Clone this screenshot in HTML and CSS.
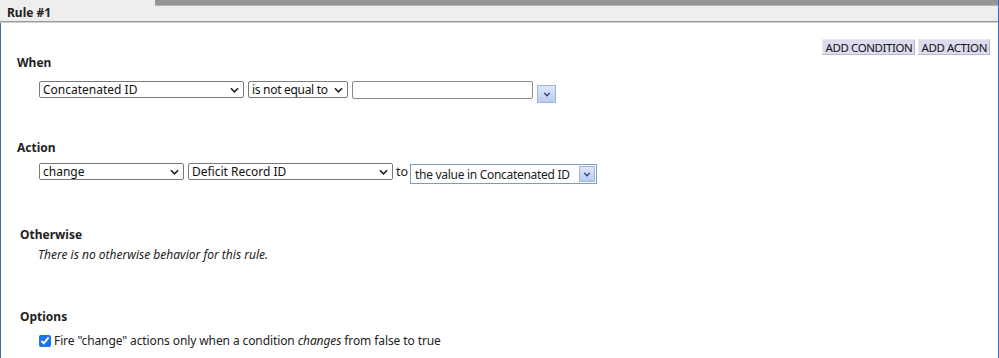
FILE: index.html
```html
<!DOCTYPE html>
<html lang="en">
<head>
    <meta charset="UTF-8">
    <meta name="viewport" content="width=device-width, initial-scale=1.0">
    <title>Rule #1</title>
    <link rel="stylesheet" href="styles.css">
</head>
<body>
    <div class="rule">
        <div class="rule-head">
            <div class="tab-strip"></div>
            <div class="rule-title">Rule #1</div>
        </div>
        <div class="rule-body">
            <div class="toolbar">
                <button class="tool-btn">ADD CONDITION</button>
                <button class="tool-btn">ADD ACTION</button>
            </div>

            <div class="label label-when">When</div>
            <div class="row row-when">
                <div class="select w-field">
                    <span>Concatenated ID</span>
                    <svg class="chev" viewBox="0 0 10 6"><path d="M1 1l4 4 4-4" /></svg>
                </div>
                <div class="select w-op">
                    <span>is not equal to</span>
                    <svg class="chev" viewBox="0 0 10 6"><path d="M1 1l4 4 4-4" /></svg>
                </div>
                <div class="text-input"></div>
                <div class="drop-btn">
                    <svg viewBox="0 0 10 6"><path d="M1.5 1l3.5 3.5 3.5-3.5" /></svg>
                </div>
            </div>

            <div class="label label-action">Action</div>
            <div class="row row-action">
                <div class="select w-verb">
                    <span>change</span>
                    <svg class="chev" viewBox="0 0 10 6"><path d="M1 1l4 4 4-4" /></svg>
                </div>
                <div class="select w-target">
                    <span>Deficit Record ID</span>
                    <svg class="chev" viewBox="0 0 10 6"><path d="M1 1l4 4 4-4" /></svg>
                </div>
                <span class="to">to</span>
                <div class="combo">
                    <span>the value in Concatenated ID</span>
                    <div class="combo-btn">
                        <svg viewBox="0 0 10 6"><path d="M1.5 1l3.5 3.5 3.5-3.5" /></svg>
                    </div>
                </div>
            </div>

            <div class="label label-otherwise">Otherwise</div>
            <div class="note">There is no otherwise behavior for this rule.</div>

            <div class="label label-options">Options</div>
            <label class="option">
                <input type="checkbox" checked>
                <span>Fire "change" actions only when a condition <em>changes</em> from false to true</span>
            </label>
        </div>
    </div>
</body>
</html>
```

FILE: styles.css
```css
body {
    margin: 0;
    font-family: "Noto Sans", "Open Sans", sans-serif;
    font-size: 12px;
    color: #222;
    background-color: #fff;
}

.rule {
    width: 998px;
    height: 358px;
    border-right: 1px solid #3f6cb0;
    display: flex;
    flex-direction: column;
}

.rule-head {
    background-color: #eeeeee;
    border-bottom: 1px solid #9a9a9a;
    box-shadow: 0 1px 0 #d0d0d0;
    height: 21px;
}

.tab-strip {
    margin-left: 155px;
    height: 5px;
    background-color: #959595;
    border-bottom: 1px solid #b4b4b4;
}

.rule-title {
    padding-left: 7px;
    font-weight: bold;
    line-height: 14px;
    color: #222;
}

.rule-body {
    flex: 1;
    border-left: 1px solid #3f6cb0;
    margin-top: 1px;
}

.toolbar {
    display: flex;
    justify-content: flex-end;
    gap: 3px;
    padding-right: 8px;
    margin-top: 16px;
}

.tool-btn {
    font-family: inherit;
    font-size: 11.5px;
    color: #111;
    background-color: #dcdcee;
    border: 1px solid #e8e8f4;
    border-right-color: #b8b8c8;
    border-bottom-color: #b8b8c8;
    padding: 0 2px;
    height: 16px;
    line-height: 13px;
    letter-spacing: -0.4px;
}

.label {
    font-weight: bold;
    line-height: 16px;
    color: #222;
}

.label-when {
    padding-left: 16px;
}

.label-action {
    padding-left: 16px;
    margin-top: 37px;
}

.label-otherwise {
    padding-left: 19px;
    margin-top: 43px;
}

.label-options {
    padding-left: 19px;
    margin-top: 46px;
}

.row {
    display: flex;
    align-items: flex-start;
    padding-left: 38px;
    white-space: nowrap;
}

.row-when {
    margin-top: 10px;
    gap: 4px;
}

.row-action {
    margin-top: 7px;
    gap: 4px;
}

.select {
    box-sizing: border-box;
    display: flex;
    align-items: center;
    justify-content: space-between;
    height: 17px;
    border: 1px solid #7a7a7a;
    border-radius: 2px;
    padding: 0 4px 0 3px;
    font-size: 12px;
    line-height: 15px;
    color: #111;
    background-color: #fff;
    overflow: hidden;
}

.chev {
    flex: none;
    width: 9px;
    height: 6px;
    fill: none;
    stroke: #222;
    stroke-width: 1.8;
}

.w-field {
    width: 205px;
}

.w-op {
    width: 100px;
    letter-spacing: -0.3px;
}

.w-verb {
    width: 145px;
}

.w-target {
    width: 205px;
}

.text-input {
    box-sizing: border-box;
    width: 181px;
    height: 18px;
    border: 1px solid #8a8a8a;
    border-radius: 2px;
    background-color: #fff;
}

.drop-btn,
.combo-btn {
    box-sizing: border-box;
    display: flex;
    align-items: center;
    justify-content: center;
    background: linear-gradient(#dfe8fb, #b8cbf2);
    border: 1px solid #9fb3df;
}

.drop-btn {
    width: 19px;
    height: 18px;
    margin-top: 4px;
}

.drop-btn svg,
.combo-btn svg {
    width: 8px;
    height: 5px;
    fill: none;
    stroke: #33477a;
    stroke-width: 1.8;
}

.to {
    font-size: 12.5px;
    line-height: 17px;
    margin-left: -1px;
    margin-right: -2px;
}

.combo {
    box-sizing: border-box;
    display: flex;
    align-items: center;
    justify-content: space-between;
    width: 187px;
    height: 20px;
    margin-top: 1px;
    border: 1px solid #7f9db9;
    background-color: #fff;
    font-size: 12px;
    letter-spacing: -0.3px;
    padding: 0 1px 0 4px;
    overflow: hidden;
}

.combo-btn {
    flex: none;
    width: 16px;
    height: 16px;
}

.note {
    padding-left: 37px;
    margin-top: 4px;
    font-style: italic;
    line-height: 16px;
    color: #222;
}

.option {
    display: flex;
    align-items: center;
    padding-left: 38px;
    margin-top: 8px;
    line-height: 16px;
    color: #222;
    letter-spacing: -0.1px;
}

.option input {
    width: 12px;
    height: 12px;
    margin: 0 3px 0 0;
    accent-color: #1a73e8;
}
```
